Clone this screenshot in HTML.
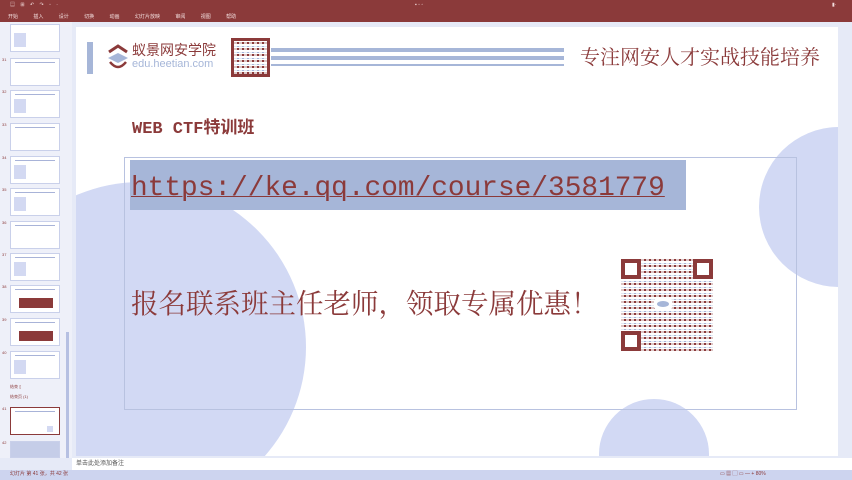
<!DOCTYPE html>
<html><head><meta charset="utf-8"><style>
*{margin:0;padding:0;box-sizing:border-box}
html,body{width:852px;height:480px;overflow:hidden}
body{background:#e6eaf7;font-family:"Liberation Sans","Noto Sans CJK SC",sans-serif;position:relative}
.abs{position:absolute;line-height:1;white-space:nowrap}
.top{left:0;top:0;width:852px;height:22px;background:#8b3a3a;color:#f3dede;font-size:5px}
.left{left:0;top:22px;width:72px;height:436px;background:#eef0f9;overflow:hidden}
.th{position:absolute;left:10px;width:50px;height:28px;background:#fff;border:1px solid #c9d0ea}
.th i{position:absolute;left:4px;top:3px;width:40px;height:1px;background:#a8b3d8}
.th b{position:absolute;left:3px;top:8px;width:12px;height:14px;background:#d3d9f2}
.num{position:absolute;left:2px;font-size:4px;color:#8b3a3a}
.slide{left:76px;top:27px;width:762px;height:429px;background:#fff;overflow:hidden}
.red{color:#8b3a3a}
.qr{background:
 repeating-linear-gradient(90deg,rgba(255,255,255,.7) 0 3px,transparent 3px 5px),
 repeating-linear-gradient(0deg,#8b3a3a 0 2px,#fff 2px 3px,#a6b6d8 3px 4px,#fff 4px 6px)}
</style></head><body>
<div class="abs top">
 <div class="abs" style="left:10px;top:3px;letter-spacing:2px">▤ ⊞ ↶ ↷ ◦ ·</div>
 <div class="abs" style="left:8px;top:15px;word-spacing:14px">开始 插入 设计 切换 动画 幻灯片放映 审阅 视图 帮助</div>
 <div class="abs" style="left:415px;top:3px">▪ ◦ ◦</div>
 <div class="abs" style="left:832px;top:3px">▮·</div>
</div>
<div class="abs left">
 <div class="th" style="top:2px"><b></b></div>
 <div class="th" style="top:36px"><i></i></div><div class="num" style="top:36px">31</div>
 <div class="th" style="top:68px"><i></i><b></b></div><div class="num" style="top:68px">32</div>
 <div class="th" style="top:101px"><i></i></div><div class="num" style="top:101px">33</div>
 <div class="th" style="top:134px"><i></i><b></b></div><div class="num" style="top:134px">34</div>
 <div class="th" style="top:166px"><i></i><b></b></div><div class="num" style="top:166px">35</div>
 <div class="th" style="top:199px"><i></i></div><div class="num" style="top:199px">36</div>
 <div class="th" style="top:231px"><i></i><b></b></div><div class="num" style="top:231px">37</div>
 <div class="th" style="top:263px"><i></i><b style="left:8px;top:12px;width:34px;height:10px;background:#8b3a3a"></b></div><div class="num" style="top:263px">38</div>
 <div class="th" style="top:296px"><i></i><b style="left:8px;top:12px;width:34px;height:10px;background:#8b3a3a"></b></div><div class="num" style="top:296px">39</div>
 <div class="th" style="top:329px"><i></i><b></b></div><div class="num" style="top:329px">40</div>
 <div class="num" style="left:10px;top:363px">结束 ▯</div>
 <div class="num" style="left:10px;top:373px">结束页 (1)</div>
 <div class="th" style="top:385px;border:1px solid #8b3a3a"><i></i><b style="left:36px;top:18px;width:6px;height:6px"></b></div><div class="num" style="top:385px">41</div>
 <div class="th" style="top:419px;height:17px;background:#c5cde8"></div><div class="num" style="top:419px">42</div>
 <div class="abs" style="left:66px;top:310px;width:3px;height:126px;background:#b6c0e2"></div>
</div>
<div class="abs slide">
 <div class="abs" style="left:-100px;top:155px;width:330px;height:330px;border-radius:50%;background:#d2d9f4"></div>
 <div class="abs" style="left:683px;top:100px;width:160px;height:160px;border-radius:50%;background:#d2d9f4"></div>
 <div class="abs" style="left:523px;top:372px;width:110px;height:110px;border-radius:50%;background:#d2d9f4"></div>
 <div class="abs" style="left:11px;top:15px;width:6px;height:32px;background:#a6b6d8"></div>
 <svg class="abs" style="left:30px;top:17px" width="24" height="28" viewBox="0 0 24 28"><path d="M3 8 L12 2 L21 8" stroke="#8b3a3a" stroke-width="3" fill="none"/><path d="M2 14 L12 9 L22 14 L12 19Z" fill="#a6b6d8"/><path d="M4 18 Q12 28 20 18" stroke="#8b3a3a" stroke-width="2.5" fill="none"/></svg>
 <div class="abs red" style="left:56px;top:16px;font-size:14px">蚁景网安学院</div>
 <div class="abs" style="left:56px;top:32px;font-size:11px;color:#a6b6d8">edu.heetian.com</div>
 <div class="abs qr" style="left:155px;top:11px;width:39px;height:39px;border:3px solid #8b3a3a"></div>
 <div class="abs" style="left:195px;top:21px;width:293px;height:4px;background:#a6b6d8"></div>
 <div class="abs" style="left:195px;top:29px;width:293px;height:4px;background:#a6b6d8"></div>
 <div class="abs" style="left:195px;top:37px;width:293px;height:2px;background:#a6b6d8"></div>
 <div class="abs red" style="left:504px;top:19px;font-size:20px;font-family:'Noto Serif CJK SC',serif">专注网安人才实战技能培养</div>
 <div class="abs red" style="left:56px;top:94px;font-size:17px;font-weight:bold;font-family:'Liberation Mono','Noto Sans CJK SC',monospace">WEB CTF特训班</div>
 <div class="abs" style="left:48px;top:130px;width:673px;height:253px;border:1px solid #b8c2e0"></div>
 <div class="abs" style="left:54px;top:133px;width:556px;height:50px;background:#a6b6d8"></div>
 <div class="abs red" style="left:55px;top:148px;font-size:27.8px;font-family:'Liberation Mono',monospace;text-decoration:underline;text-decoration-thickness:1px">https://ke.qq.com/course/3581779</div>
 <div class="abs red" style="left:55px;top:261px;font-size:27.5px;font-family:'Noto Serif CJK SC',serif">报名联系班主任老师，领取专属优惠！</div>
 <div class="abs qr" style="left:545px;top:232px;width:92px;height:92px"></div>
 <div class="abs" style="left:545px;top:232px;width:20px;height:20px;border:4px solid #8b3a3a;background:#fff"></div>
 <div class="abs" style="left:617px;top:232px;width:20px;height:20px;border:4px solid #8b3a3a;background:#fff"></div>
 <div class="abs" style="left:545px;top:304px;width:20px;height:20px;border:4px solid #8b3a3a;background:#fff"></div>
 <div class="abs" style="left:578px;top:271px;width:18px;height:12px;background:#fff;border-radius:3px"></div>
 <div class="abs" style="left:581px;top:274px;width:12px;height:6px;background:#a6b6d8;border-radius:50%"></div>
</div>
<div class="abs" style="left:72px;top:458px;width:780px;height:12px;background:#fff;font-size:6px;color:#555;padding:3px 4px">单击此处添加备注</div>
<div class="abs" style="left:0;top:470px;width:852px;height:10px;background:#cdd4ef;font-size:5px;color:#8b3a3a;padding:2px 10px">幻灯片 第 41 张，共 42 张<span style="position:absolute;left:720px;top:2px">▭ ▦ ▢ ▭ — + 80%</span></div>
</body></html>
